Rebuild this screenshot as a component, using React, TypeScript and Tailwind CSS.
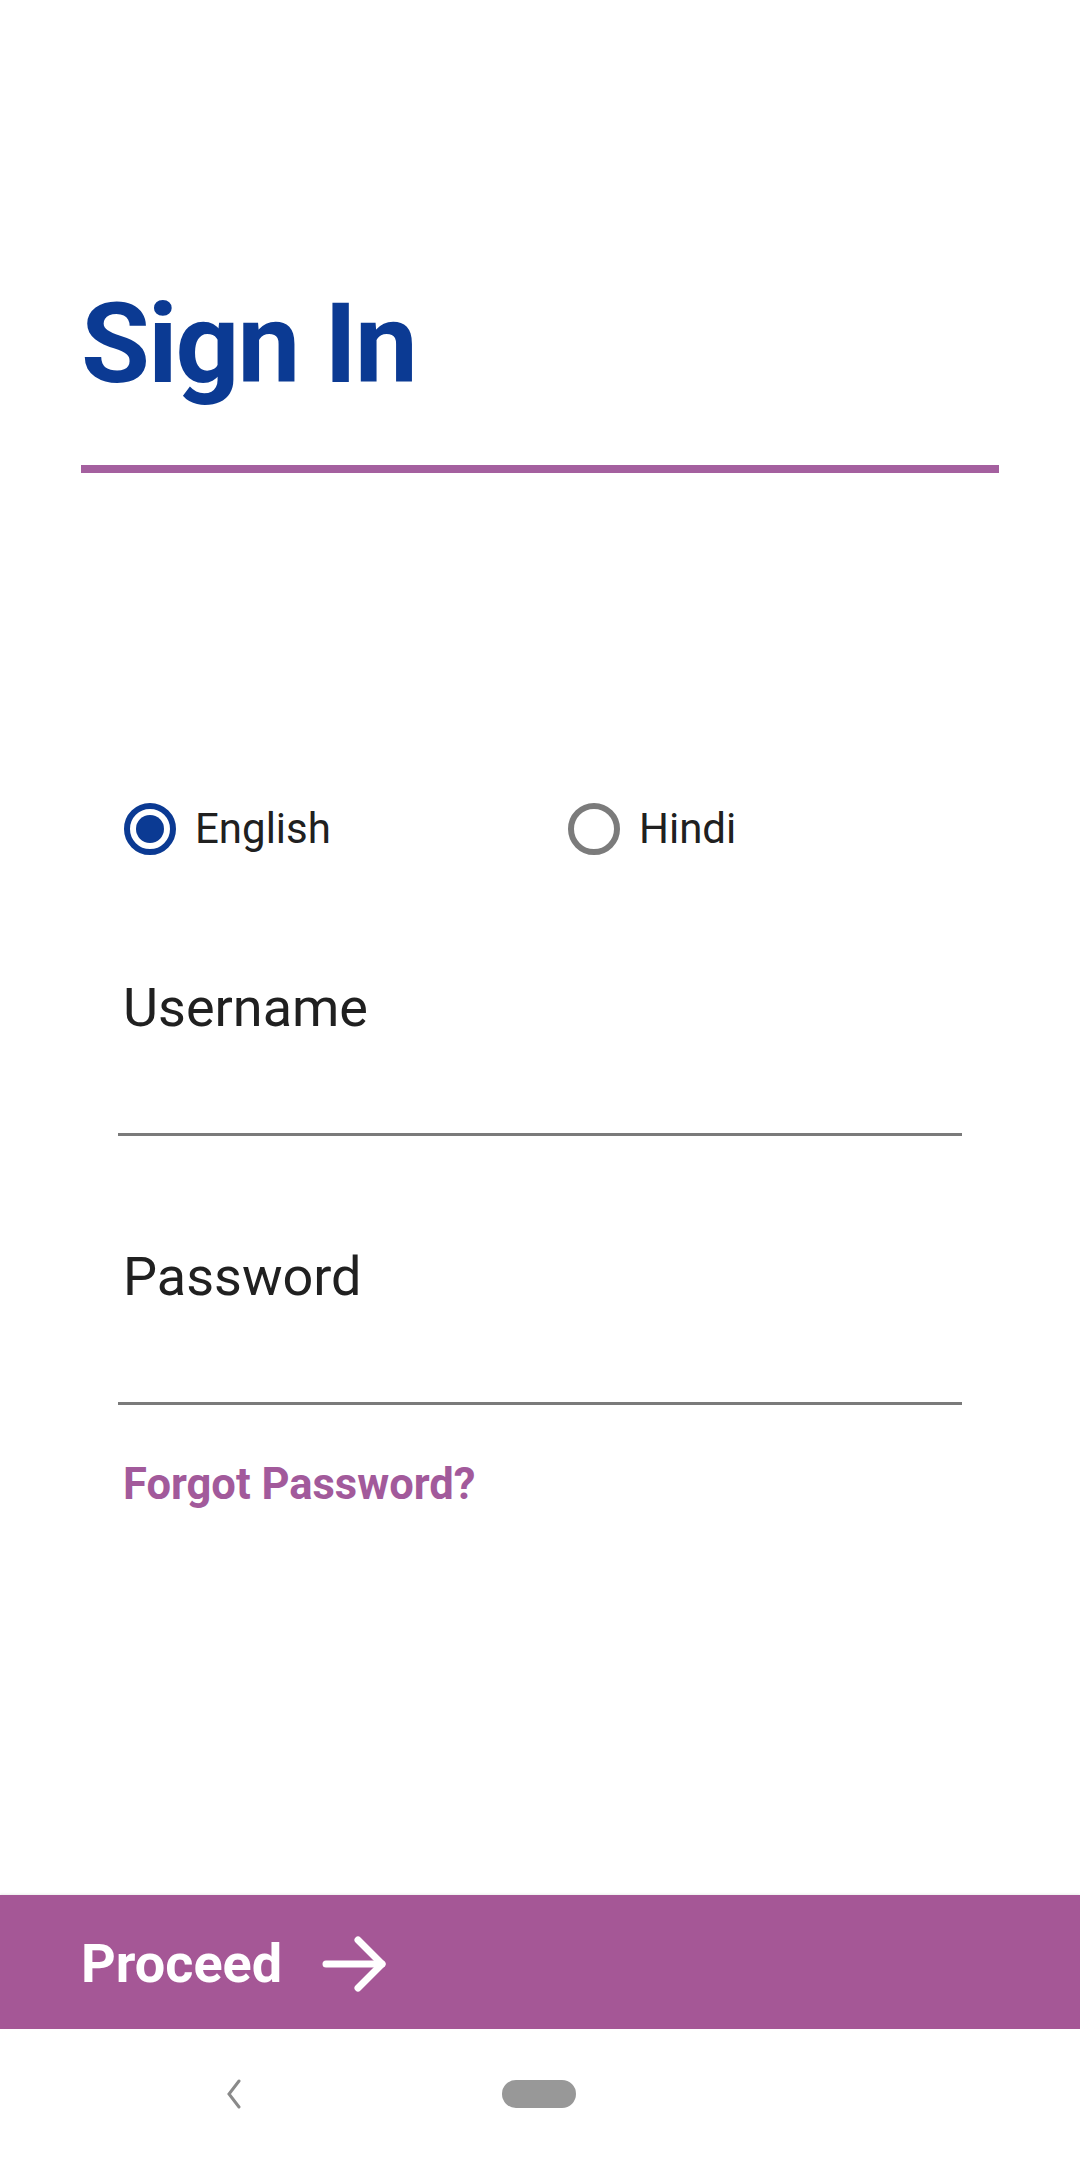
import React, { useState } from "react";

const FONT = { fontFamily: "Roboto, 'Noto Sans', sans-serif" };

function Radio({ checked, label, onClick }: { checked: boolean; label: string; onClick: () => void }) {
  return (
    <button type="button" onClick={onClick} className="flex items-center gap-[19px]">
      <span
        className={
          checked
            ? "flex h-[52px] w-[52px] items-center justify-center rounded-full border-[6px] border-[#0b3a93]"
            : "flex h-[52px] w-[52px] items-center justify-center rounded-full border-[6px] border-[#7b7b7b]"
        }
      >
        {checked && <span className="h-[28px] w-[28px] rounded-full bg-[#0b3a93]" />}
      </span>
      <span className="text-[42px] leading-none text-[#202020]">{label}</span>
    </button>
  );
}

function Field({ label, mt }: { label: string; mt: string }) {
  return (
    <div className={`ml-[118px] w-[844px] border-b-[3px] border-[#7a7a7a] ${mt}`}>
      <div className="h-[152px] pl-[5px] text-[54px] leading-none text-[#202020]">{label}</div>
    </div>
  );
}

export default function App() {
  const [lang, setLang] = useState("en");
  return (
    <div className="flex h-[2160px] w-[1080px] flex-col bg-white" style={FONT}>
      <div className="px-[81px] pt-[288px]">
        <h1 className="text-[112px] font-bold leading-none tracking-[-2px] text-[#0b3a93]">Sign In</h1>
        <div className="mt-[65px] h-[8px] w-full bg-[#a4609f]" />
      </div>

      <div className="mt-[330px] flex pl-[124px]">
        <div className="w-[444px]">
          <Radio checked={lang === "en"} label="English" onClick={() => setLang("en")} />
        </div>
        <Radio checked={lang === "hi"} label="Hindi" onClick={() => setLang("hi")} />
      </div>

      <Field label="Username" mt="mt-[126px]" />
      <Field label="Password" mt="mt-[114px]" />

      <a className="ml-[123px] mt-[58px] text-[43.5px] font-bold leading-none text-[#a25a9b]">Forgot Password?</a>

      <div className="flex-1" />

      <button
        type="button"
        className="flex h-[134px] w-full items-center gap-[40px] bg-[#a55796] px-[81px] pt-[4px] shadow-[0_-1px_2px_rgba(0,0,0,0.08)]"
      >
        <span className="text-[54px] font-bold leading-none text-white">Proceed</span>
        <svg width="66" height="56" viewBox="0 0 66 56" fill="none" stroke="white" strokeWidth="7" strokeLinecap="round" strokeLinejoin="round">
          <path d="M4 28H60" />
          <path d="M36 4L60 28L36 52" />
        </svg>
      </button>

      <div className="relative h-[131px] w-full bg-white">
        <svg className="absolute left-[225px] top-[50px]" width="18" height="30" viewBox="0 0 18 30" fill="none" stroke="#8a8a8a" strokeWidth="3" strokeLinecap="round">
          <path d="M14 2L4 15L14 28" />
        </svg>
        <div className="absolute left-[502px] top-[51px] h-[28px] w-[74px] rounded-full bg-[#989898]" />
      </div>
    </div>
  );
}
